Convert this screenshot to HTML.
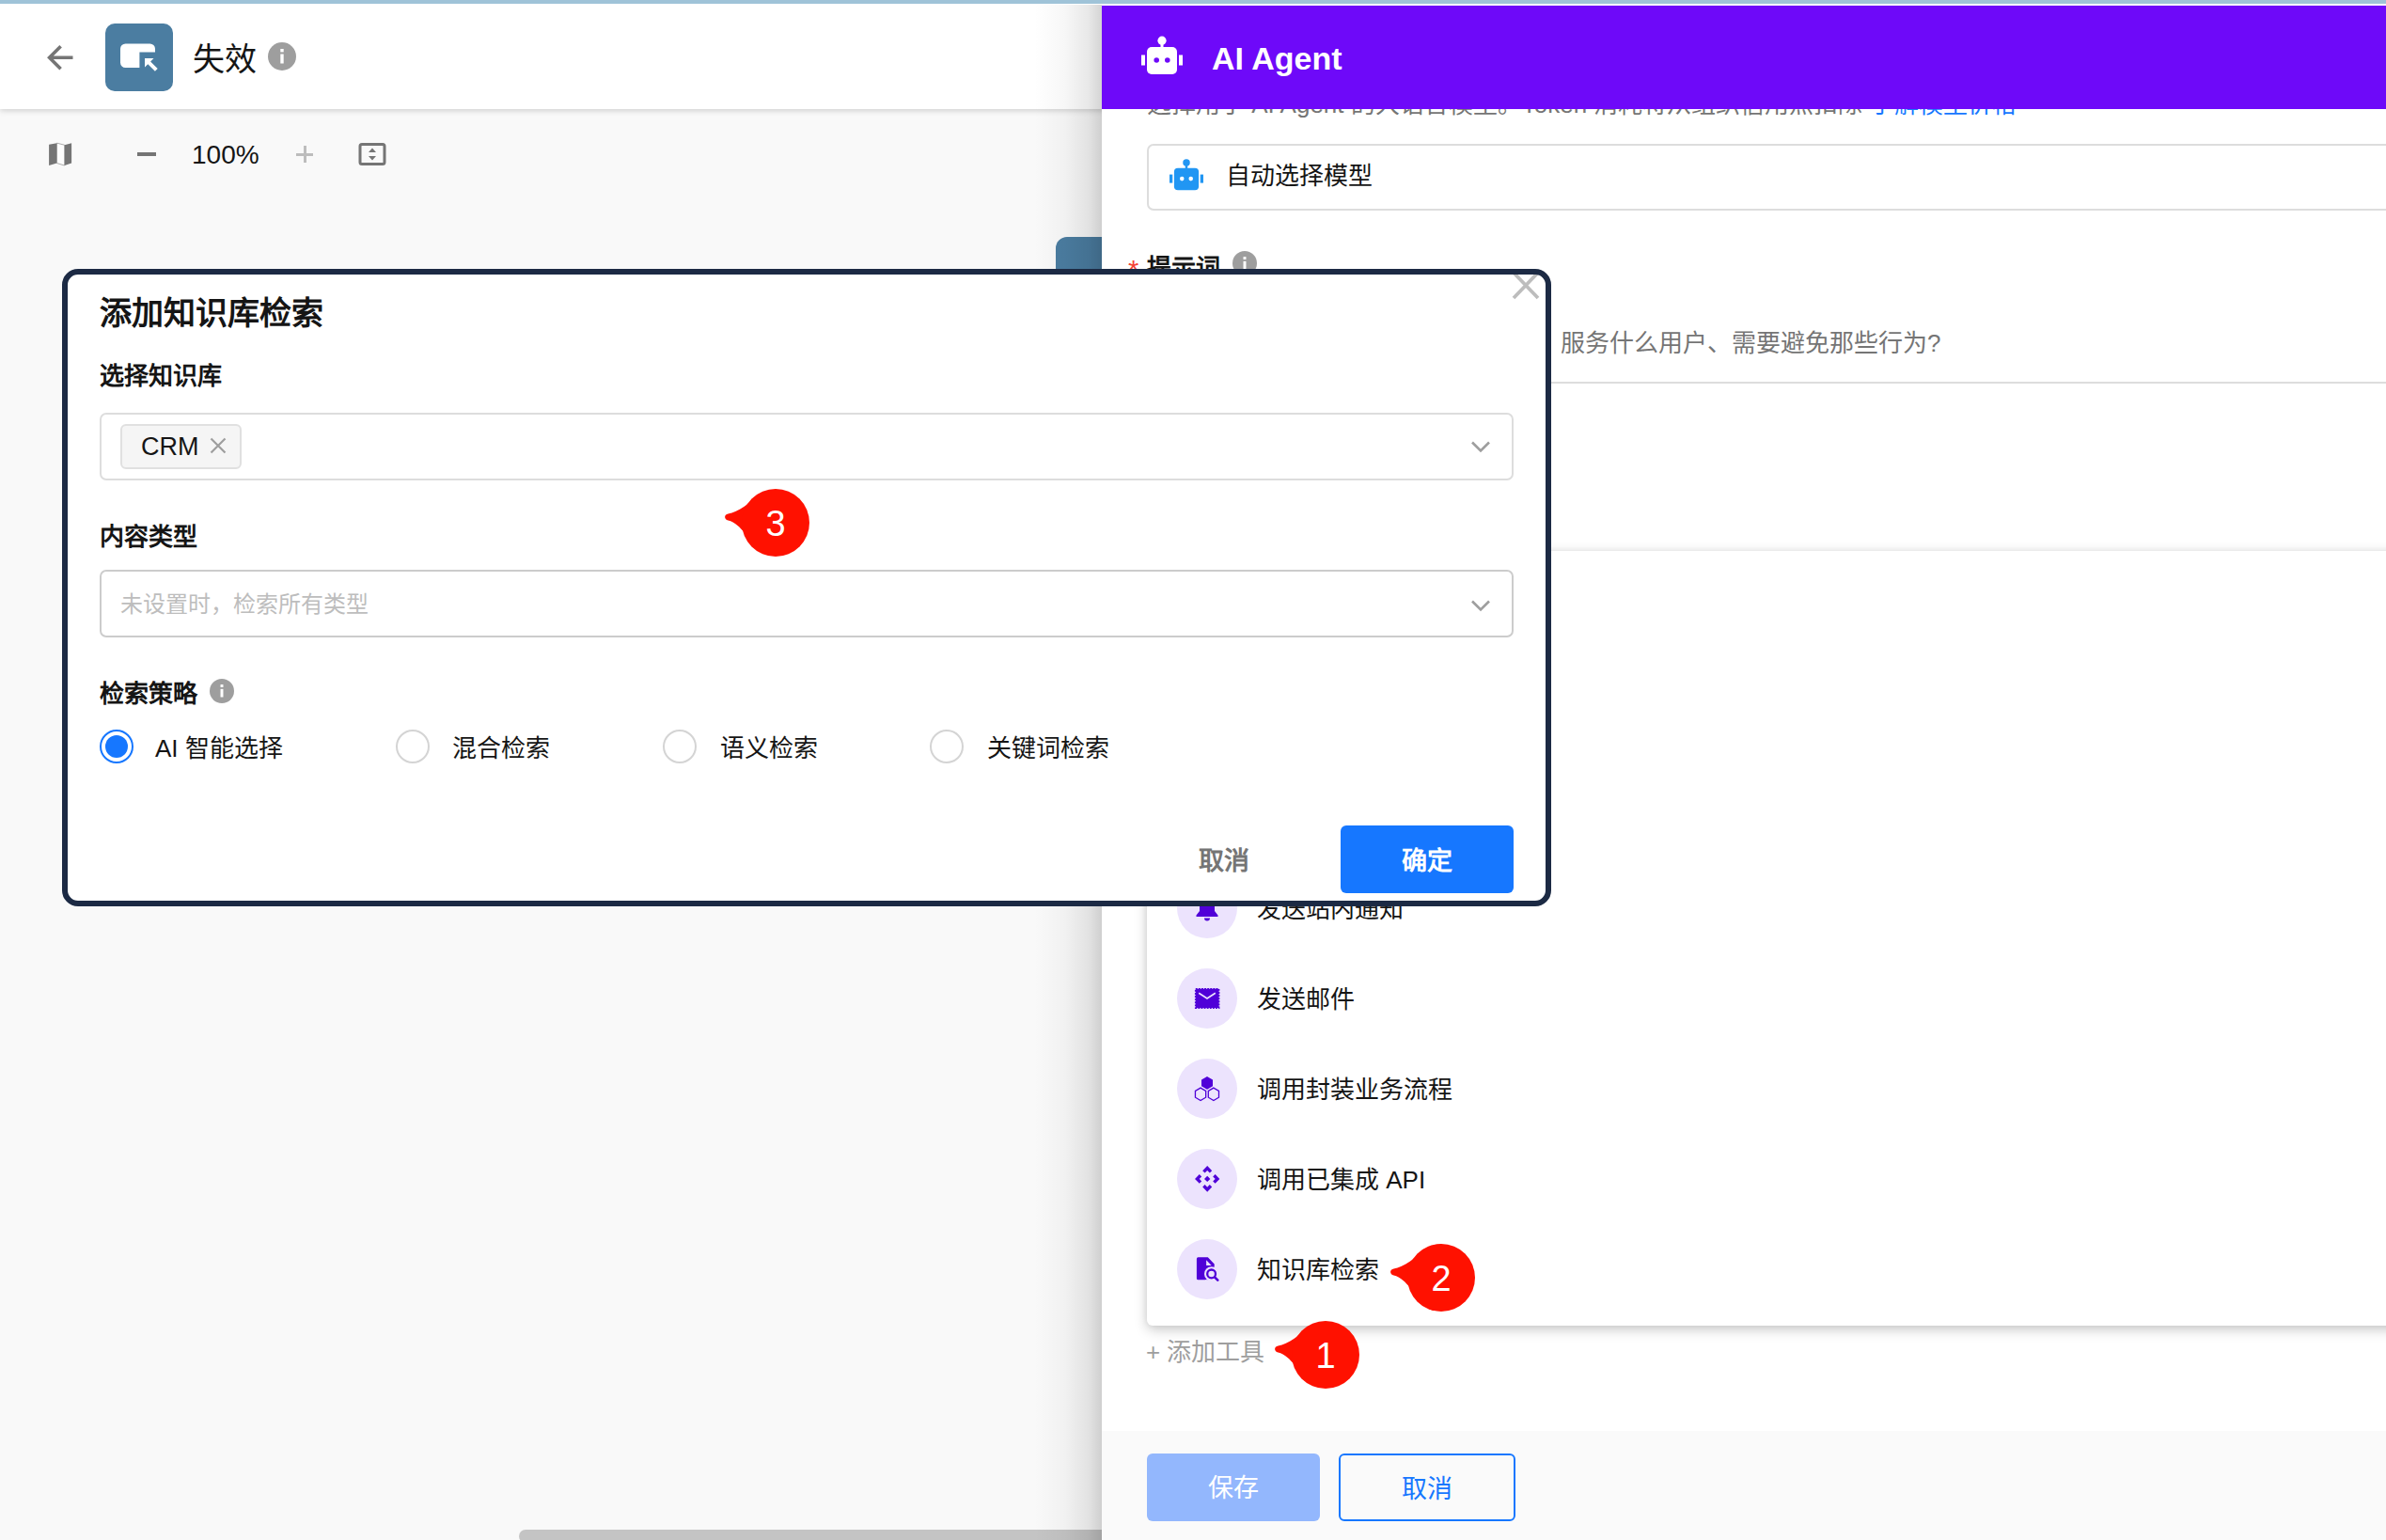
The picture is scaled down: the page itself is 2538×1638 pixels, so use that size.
<!DOCTYPE html>
<html lang="zh-CN">
<head>
<meta charset="utf-8">
<title>AI Agent</title>
<style>
*{box-sizing:border-box;margin:0;padding:0}
html,body{width:2538px;height:1638px;overflow:hidden;background:#f9f9f9;font-family:"Liberation Sans",sans-serif;color:#151515}
.abs{position:absolute}
.t{position:absolute;white-space:nowrap;line-height:1}
#topstrip{left:0;top:0;width:2538px;height:4px;background:#9fc3d8}
#header{left:0;top:0;width:2538px;height:116px;background:#fff;box-shadow:0 2px 6px rgba(0,0,0,.16)}
#appicon{left:112px;top:25px;width:72px;height:72px;border-radius:10px;background:#4b7da1}
#canvas{left:0;top:116px;width:1172px;height:1522px;background:#f9f9f9}
#node{left:1123px;top:252px;width:60px;height:60px;border-radius:12px 0 0 0;background:#4b7da1}
#panelshadow{left:1100px;top:5px;width:72px;height:1633px;background:linear-gradient(to right,rgba(0,0,0,0) 0%,rgba(0,0,0,.03) 45%,rgba(0,0,0,.09) 80%,rgba(0,0,0,.17) 100%)}
#panel{left:1172px;top:5px;width:1366px;height:1633px;background:#fff;overflow:hidden}
#phead{left:0;top:1px;width:1366px;height:110px;background:#6e09f9}
#scroll{left:552px;top:1627px;width:640px;height:14px;border-radius:7px;background:#c4c4c4}
</style>
</head>
<body>
<div class="abs" id="canvas"></div>
<div class="abs" id="node"></div>
<div class="abs" id="scroll"></div>
<div class="abs" id="header"></div>
<div class="abs" id="topstrip"></div>
<div class="abs" id="appicon"></div>
<svg class="abs" style="left:46px;top:44px" width="36" height="36" viewBox="0 0 36 36"><path d="M31.5 17.2H8.6M18.6 5.2L6.6 17.2L18.6 29.2" fill="none" stroke="#757575" stroke-width="3.6"/></svg>
<svg class="abs" style="left:112px;top:25px" width="72" height="72" viewBox="0 0 72 72"><path d="M21.5 21.5h26a5.5 5.5 0 0 1 5.5 5.500v3.6H36.400v16.400H21.500a5.500 5.500 0 0 1-5.500-5.500v-14.500a5.500 5.500 0 0 1 5.500-5.500z" fill="#fff"/><path d="M42 37h9.500l-3.400 3.400 7.600 7.600-2.800 2.800-7.600-7.600-3.300 3.300z" fill="#fff"/></svg>
<div class="t" style="left:205px;top:46px;font-size:34px;width:68px">失效</div>
<svg class="abs" style="left:285px;top:45px" width="30" height="30" viewBox="0 0 30 30"><circle cx="15" cy="15" r="15" fill="#9e9e9e"/><rect x="13.300" y="12.500" width="3.400" height="10" fill="#fff"/><rect x="13.300" y="7" width="3.400" height="3.400" fill="#fff"/></svg>
<svg class="abs" style="left:50px;top:150px" width="28" height="28" viewBox="0 0 28 28"><path d="M2.100 3.800L10.500 2.200V23.500L2.100 26zM18.600 4.200L26.100 2.200V23.500L18.600 26z" fill="#757575"/><path d="M10.500 2.200L18.600 4.200V26L10.500 23.500z" fill="#fdfdfd" stroke="#757575" stroke-width="0.600"/></svg>
<div class="abs" style="left:146px;top:162px;width:20px;height:4px;background:#757575"></div>
<div class="t" style="left:204px;top:151px;font-size:28px;line-height:28px">100%</div>
<div class="abs" style="left:315px;top:163px;width:18px;height:3px;background:#bdbdbd"></div>
<div class="abs" style="left:322.500px;top:155px;width:3px;height:18px;background:#bdbdbd"></div>
<svg class="abs" style="left:380px;top:150px" width="32" height="28" viewBox="0 0 32 28"><rect x="3" y="3.500" width="26" height="21" rx="2" fill="none" stroke="#757575" stroke-width="3"/><path d="M16 7.500l4 4.500h-8zM16 20.500l4-4.500h-8z" fill="#757575"/></svg>
<div class="abs" id="panelshadow"></div>
<div class="abs" id="panel">
<div class="t" style="left:48px;top:93px;font-size:26px;line-height:26px;color:#757575">选择用于 AI Agent 的大语言模型。Token 消耗将从组织信用点扣除 <span style="color:#1677ff">了解模型价格</span></div>
<div class="abs" style="left:48px;top:148px;width:1400px;height:71px;border:2px solid #ddd;border-radius:7px;background:#fff"></div>
<svg class="abs" style="left:70px;top:163px" width="40" height="36" viewBox="0 0 48 44"><circle cx="24" cy="6.200" r="4.600" fill="#2196f3"/><rect x="22.500" y="8" width="3" height="6" fill="#2196f3"/><rect x="8" y="13" width="32" height="29" rx="5" fill="#2196f3"/><rect x="2" y="21.500" width="4" height="11" fill="#2196f3"/><rect x="42" y="21.500" width="4" height="11" fill="#2196f3"/><circle cx="18.200" cy="27" r="2.800" fill="#fff"/><circle cx="29.800" cy="27" r="2.800" fill="#fff"/></svg>
<div class="t" style="left:132px;top:168px;font-size:26px;line-height:28px">自动选择模型</div>
<div class="t" style="left:28px;top:267px;font-size:29px;line-height:30px;color:#f44336">*</div>
<div class="t" style="left:48px;top:265px;font-size:26px;line-height:30px;font-weight:bold">提示词</div>
<svg class="abs" style="left:139px;top:262px" width="26" height="26" viewBox="0 0 30 30"><circle cx="15" cy="15" r="15" fill="#9e9e9e"/><rect x="13.300" y="12.500" width="3.400" height="10" fill="#fff"/><rect x="13.300" y="7" width="3.400" height="3.400" fill="#fff"/></svg>
<div class="t" style="left:488px;top:346px;font-size:26px;line-height:28px;color:#757575">服务什么用户、需要避免那些行为?</div>
<div class="abs" style="left:48px;top:401px;width:1400px;height:2px;background:#ddd"></div>
<div class="abs" id="card" style="left:48px;top:581px;width:1400px;height:824px;background:#fff;border-radius:6px;box-shadow:0 4px 14px rgba(0,0,0,.22),0 0 6px rgba(0,0,0,.06)"></div>
<div class="abs" style="left:80px;top:929px;width:64px;height:64px;border-radius:32px;background:#ece3fd"></div>
<svg class="abs" style="left:96px;top:945px" width="32" height="32" viewBox="0 0 32 32"><path d="M16 2.500c-4.800 0-8 3.800-8 8.500v8l-3.500 4.500v1.500h23v-1.500L24 19v-8c0-4.700-3.200-8.500-8-8.500z" fill="#5000d8"/><path d="M13 26.500h6a3 3 0 0 1-6 0z" fill="#5000d8"/></svg>
<div class="t" style="left:165px;top:948px;font-size:26px;line-height:28px">发送站内通知</div>
<div class="abs" style="left:80px;top:1025px;width:64px;height:64px;border-radius:32px;background:#ece3fd"></div>
<svg class="abs" style="left:96px;top:1041px" width="32" height="32" viewBox="0 0 32 32"><rect x="3.800" y="5.800" width="24.700" height="20.200" fill="#5000d8" stroke="#5000d8" stroke-width="1.800" stroke-dasharray="1.900 1.200"/><path d="M7.200 10.200L16 16l8.800-5.800" fill="none" stroke="#ece3fd" stroke-width="1.700"/></svg>
<div class="t" style="left:165px;top:1044px;font-size:26px;line-height:28px">发送邮件</div>
<div class="abs" style="left:80px;top:1121px;width:64px;height:64px;border-radius:32px;background:#ece3fd"></div>
<svg class="abs" style="left:96px;top:1137px" width="32" height="32" viewBox="0 0 32 32"><path d="M16 3.100l6 3.400v6.800l-6 3.400-6-3.400V6.500z" fill="#5000d8"/><path d="M9.050 15.100l5.600 3.300v6.800l-5.600 3.300-5.600-3.300v-6.800zM22.900 15.100l5.600 3.300v6.800l-5.600 3.300-5.600-3.300v-6.800z" fill="none" stroke="#5000d8" stroke-width="1.300"/></svg>
<div class="t" style="left:165px;top:1140px;font-size:26px;line-height:28px">调用封装业务流程</div>
<div class="abs" style="left:80px;top:1217px;width:64px;height:64px;border-radius:32px;background:#ece3fd"></div>
<svg class="abs" style="left:96px;top:1233px" width="32" height="32" viewBox="0 0 32 32"><path d="M12.400 8.400L16.200 4.500L20 8.400M12.400 23.300L16.200 27.200L20 23.300M9 12.200L5.400 15.900L9 19.600M23.400 12.200L27 15.900L23.400 19.600" fill="none" stroke="#5000d8" stroke-width="3.400" stroke-linejoin="miter"/><path d="M16.200 12.800l3.200 3.100-3.200 3.100-3.200-3.100z" fill="#5000d8"/></svg>
<div class="t" style="left:165px;top:1236px;font-size:26px;line-height:28px">调用已集成 API</div>
<div class="abs" style="left:80px;top:1313px;width:64px;height:64px;border-radius:32px;background:#ece3fd"></div>
<svg class="abs" style="left:96px;top:1329px" width="32" height="32" viewBox="0 0 32 32"><path d="M6.500 3.300H16.800L23.700 10.500V27.300H6.500a1.600 1.600 0 0 1-1.600-1.600V4.900A1.600 1.600 0 0 1 6.500 3.300z" fill="#5000d8"/><path d="M15.100 6.300V11.900H20.700z" fill="#ece3fd"/><circle cx="20.600" cy="20.900" r="7.600" fill="#ece3fd"/><rect x="23.800" y="13" width="4" height="16" fill="#ece3fd"/><rect x="14" y="27.400" width="14" height="3" fill="#ece3fd"/><circle cx="20.600" cy="20.900" r="4.400" fill="none" stroke="#5000d8" stroke-width="2.300"/><path d="M24 24.300l3.300 3.300" stroke="#5000d8" stroke-width="2.600" stroke-linecap="round"/></svg>
<div class="t" style="left:165px;top:1332px;font-size:26px;line-height:28px">知识库检索</div>
<div class="t" style="left:47px;top:1419px;font-size:26px;line-height:28px;color:#9e9e9e">+ 添加工具</div>
<div class="abs" style="left:0;top:1517px;width:1366px;height:116px;background:#fafafa"></div>
<div class="abs" style="left:48px;top:1541px;width:184px;height:72px;border-radius:6px;background:#93b7fd"></div>
<div class="t" style="left:48px;top:1564px;width:184px;text-align:center;font-size:27px;line-height:28px;color:#fff">保存</div>
<div class="abs" style="left:252px;top:1541px;width:188px;height:72px;border-radius:6px;border:2px solid #1677ff;background:transparent"></div>
<div class="t" style="left:252px;top:1565px;width:188px;text-align:center;font-size:27px;line-height:28px;color:#1677ff">取消</div>
<div class="abs" id="phead"></div>
<svg class="abs" style="left:40px;top:32px" width="48" height="44" viewBox="0 0 48 44"><circle cx="24" cy="6.200" r="4.600" fill="#fff"/><rect x="22.500" y="8" width="3" height="6" fill="#fff"/><rect x="8" y="13" width="32" height="29" rx="5" fill="#fff"/><rect x="2" y="21.500" width="4" height="11" fill="#fff"/><rect x="42" y="21.500" width="4" height="11" fill="#fff"/><circle cx="18.200" cy="27" r="2.800" fill="#6e09f9"/><circle cx="29.800" cy="27" r="2.800" fill="#6e09f9"/></svg>
<div class="t" style="left:117px;top:40px;font-size:34px;line-height:34px;font-weight:bold;color:#fff">AI Agent</div>
</div>
<div class="abs" id="modal" style="left:66px;top:286px;width:1584px;height:678px;background:#fff;border-radius:17px;overflow:hidden">
<div class="t" style="left:40px;top:28px;font-size:34px;line-height:38px;font-weight:bold">添加知识库检索</div>
<svg class="abs" style="left:1541px;top:2px" width="32" height="32" viewBox="0 0 32 32"><path d="M3 2l26 27M29 2L3 29" stroke="#bdbdbd" stroke-width="3.800" fill="none"/></svg>
<div class="t" style="left:40px;top:100px;font-size:26px;line-height:28px;font-weight:bold">选择知识库</div>
<div class="abs" style="left:40px;top:153px;width:1504px;height:72px;border:2px solid #ddd;border-radius:7px"></div>
<div class="abs" style="left:62px;top:165px;width:129px;height:48px;border:2px solid #e0e0e0;border-radius:6px;background:#f5f5f5"></div>
<div class="t" style="left:84px;top:175px;font-size:27px;line-height:28px">CRM</div>
<svg class="abs" style="left:157px;top:179px" width="18" height="18" viewBox="0 0 18 18"><path d="M1.500 1.500l15 15M16.500 1.500l-15 15" stroke="#9e9e9e" stroke-width="2.200" fill="none"/></svg>
<svg class="abs" style="left:1498px;top:182px" width="22" height="14" viewBox="0 0 22 14"><path d="M2 2.500l9 9 9-9" fill="none" stroke="#9e9e9e" stroke-width="2.600"/></svg>
<div class="t" style="left:40px;top:271px;font-size:26px;line-height:28px;font-weight:bold">内容类型</div>
<div class="abs" style="left:40px;top:320px;width:1504px;height:72px;border:2px solid #ccc;border-radius:7px"></div>
<div class="t" style="left:62px;top:344px;font-size:24px;line-height:26px;color:#bdbdbd">未设置时，检索所有类型</div>
<svg class="abs" style="left:1498px;top:351px" width="22" height="14" viewBox="0 0 22 14"><path d="M2 2.500l9 9 9-9" fill="none" stroke="#9e9e9e" stroke-width="2.600"/></svg>
<div class="t" style="left:40px;top:438px;font-size:26px;line-height:28px;font-weight:bold">检索策略</div>
<svg class="abs" style="left:157px;top:436px" width="26" height="26" viewBox="0 0 30 30"><circle cx="15" cy="15" r="15" fill="#9e9e9e"/><rect x="13.300" y="12.500" width="3.400" height="10" fill="#fff"/><rect x="13.300" y="7" width="3.400" height="3.400" fill="#fff"/></svg>
<div class="abs" style="left:40px;top:490px;width:36px;height:36px;border-radius:18px;border:2px solid #1677ff;background:transparent"></div><div class="abs" style="left:46px;top:496px;width:24px;height:24px;border-radius:12px;background:#1677ff"></div><div class="t" style="left:99px;top:496px;font-size:26px;line-height:28px">AI 智能选择</div>
<div class="abs" style="left:355px;top:490px;width:36px;height:36px;border-radius:18px;border:2px solid #d4d4d4;background:#fff"></div><div class="t" style="left:415px;top:496px;font-size:26px;line-height:28px">混合检索</div>
<div class="abs" style="left:639px;top:490px;width:36px;height:36px;border-radius:18px;border:2px solid #d4d4d4;background:#fff"></div><div class="t" style="left:700px;top:496px;font-size:26px;line-height:28px">语义检索</div>
<div class="abs" style="left:923px;top:490px;width:36px;height:36px;border-radius:18px;border:2px solid #d4d4d4;background:#fff"></div><div class="t" style="left:984px;top:496px;font-size:26px;line-height:28px">关键词检索</div>
<div class="t" style="left:1174px;top:616px;width:124px;text-align:center;font-size:27px;line-height:28px;font-weight:bold;color:#757575">取消</div>
<div class="abs" style="left:1360px;top:592px;width:184px;height:72px;border-radius:6px;background:#1677ff"></div>
<div class="t" style="left:1360px;top:616px;width:184px;text-align:center;font-size:27px;line-height:28px;font-weight:bold;color:#fff">确定</div>
</div>
<div class="abs" style="left:66px;top:286px;width:1584px;height:678px;border:6px solid #1c2a44;border-radius:17px"></div>
<svg class="abs" style="left:765px;top:516px" width="100" height="80" viewBox="0 0 100 80"><path d="M9.500 30.500C20 29 34 18 42 9.500L52 40L40.500 69C32 60 24 41 9.500 37.500C5 36.500 5 31 9.500 30.500z" fill="#ff1100"/><circle cx="60" cy="40" r="36" fill="#ff1100"/></svg><div class="t" style="left:795px;top:538px;width:60px;text-align:center;font-size:38px;line-height:38px;color:#fff">3</div><svg class="abs" style="left:1473px;top:1319px" width="100" height="80" viewBox="0 0 100 80"><path d="M9.500 30.500C20 29 34 18 42 9.500L52 40L40.500 69C32 60 24 41 9.500 37.500C5 36.500 5 31 9.500 30.500z" fill="#ff1100"/><circle cx="60" cy="40" r="36" fill="#ff1100"/></svg><div class="t" style="left:1503px;top:1341px;width:60px;text-align:center;font-size:38px;line-height:38px;color:#fff">2</div><svg class="abs" style="left:1350px;top:1401px" width="100" height="80" viewBox="0 0 100 80"><path d="M9.500 30.500C20 29 34 18 42 9.500L52 40L40.500 69C32 60 24 41 9.500 37.500C5 36.500 5 31 9.500 30.500z" fill="#ff1100"/><circle cx="60" cy="40" r="36" fill="#ff1100"/></svg><div class="t" style="left:1380px;top:1423px;width:60px;text-align:center;font-size:38px;line-height:38px;color:#fff">1</div>
</body>
</html>
